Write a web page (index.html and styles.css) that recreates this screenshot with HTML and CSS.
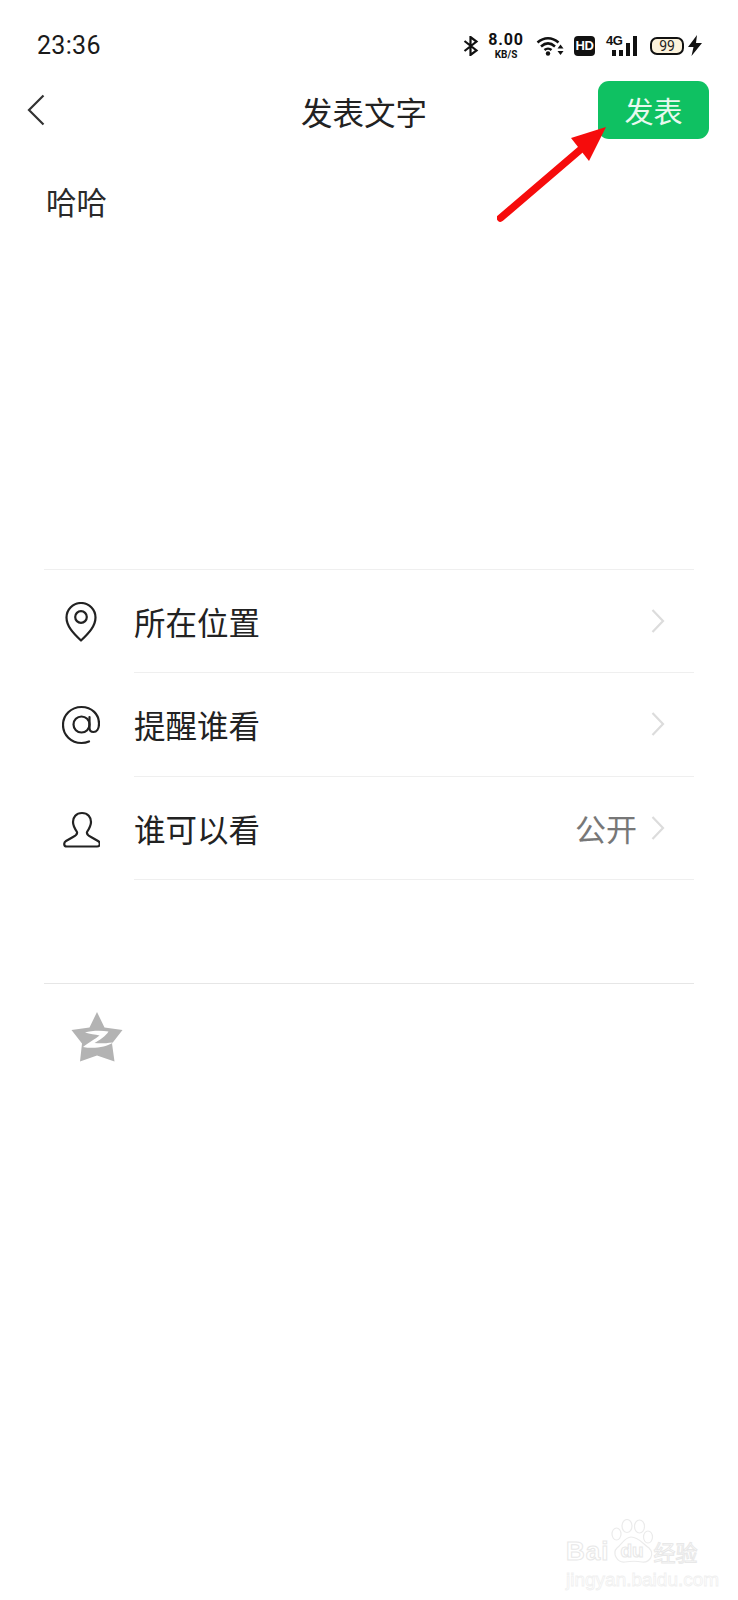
FILE: index.html
```html
<!DOCTYPE html>
<html lang="zh">
<head>
  <meta charset="utf-8">
  <meta name="viewport" content="width=device-width, initial-scale=1">
  <title>发表文字</title>
  <link rel="stylesheet" href="styles.css">
</head>
<body>
<div class="page">

  <!-- status bar -->
  <div class="status">
    <span class="time">23:36</span>
    <div class="status-icons">
      <svg class="ic-bt" width="16" height="20" viewBox="0 0 16 20"><path d="M1.500 5 13.500 14.500 7.500 19V1L13.500 5.500 1.500 15" fill="none" stroke="#111" stroke-width="2.200"/></svg>
      <div class="speed"><b>8.00</b><span>KB/S</span></div>
      <svg class="ic-wifi" width="28" height="20" viewBox="0 0 28 20">
        <path d="M1.500 6.500C8 .8 16 .8 22.500 6.500M5 10.500C9.500 6.500 14.500 6.500 19 10.500M8.500 14C10.500 12.300 13.500 12.300 15.500 14" fill="none" stroke="#111" stroke-width="2.500"/>
        <circle cx="12" cy="17.500" r="2.200" fill="#111"/>
        <path d="M24.500 8.500 27.500 12.500H21.500ZM24.500 19 27.500 15H21.500Z" fill="#111"/>
      </svg>
      <div class="hd">HD</div>
      <div class="signal">
        <span class="four-g">4G</span>
        <i class="b1"></i><i class="b2"></i><i class="b3"></i><i class="b4"></i>
      </div>
      <div class="battery"><span>99</span></div>
      <svg class="ic-bolt" width="14" height="21" viewBox="0 0 14 21"><path d="M9 0 0 12H5.500L3.500 21 14 8H8Z" fill="#111"/></svg>
    </div>
  </div>

  <!-- title bar -->
  <div class="nav">
    <svg class="back" width="20" height="32" viewBox="0 0 20 32"><path d="M17.500 1.500 3 16 17.500 30.500" fill="none" stroke="#333" stroke-width="2.200"/></svg>
    <div class="nav-title">发表文字</div>
    <div class="send">发表</div>
  </div>

  <div class="compose">哈哈</div>

  <!-- options -->
  <div class="options">
    <div class="row">
      <svg class="row-icon" width="38" height="40" viewBox="0 0 38 40">
        <path d="M19 38.500C11 31 4.500 24 4.500 15.500A14.500 14.500 0 0 1 33.500 15.500C33.500 24 27 31 19 38.500Z" fill="none" stroke="#222" stroke-width="2.200" stroke-linejoin="round"/>
        <circle cx="19" cy="15" r="5.800" fill="none" stroke="#222" stroke-width="2.200"/>
      </svg>
      <div class="row-body">
        <span class="row-label">所在位置</span>
        <svg class="chev" width="14" height="24" viewBox="0 0 14 24"><path d="M1.500 1 12 12 1.500 23" fill="none" stroke="#dcdcdc" stroke-width="2.200"/></svg>
      </div>
    </div>
    <div class="row">
      <svg class="row-icon" width="38" height="40" viewBox="0 0 38 40">
        <path d="M27 36.500C24.500 37.600 22 38 19.500 38 9 38 1 30 1 20S9 2 19.500 2 37 9.500 37 18.500C37 24 34.500 27 31.500 27 29 27 27.500 25.500 27.500 23V12" fill="none" stroke="#222" stroke-width="2.200" stroke-linecap="round"/>
        <circle cx="19.500" cy="19.500" r="8" fill="none" stroke="#222" stroke-width="2.200"/>
      </svg>
      <div class="row-body">
        <span class="row-label">提醒谁看</span>
        <svg class="chev" width="14" height="24" viewBox="0 0 14 24"><path d="M1.500 1 12 12 1.500 23" fill="none" stroke="#dcdcdc" stroke-width="2.200"/></svg>
      </div>
    </div>
    <div class="row">
      <svg class="row-icon" width="38" height="40" viewBox="0 0 38 40">
        <path d="M20 5C14 5 11 9.500 11 14 11 18 13 21 15 24 15.500 26 14 27.500 11 29L4 33C1.500 34.500 1.500 38.500 5 38.500H35C38.500 38.500 38.500 34.500 36 33L29 29C26 27.500 24.500 26 25 24 27 21 29 18 29 14 29 9.500 26 5 20 5Z" fill="none" stroke="#222" stroke-width="2.200" stroke-linejoin="round"/>
      </svg>
      <div class="row-body">
        <span class="row-label">谁可以看</span>
        <span class="row-value">公开</span>
        <svg class="chev" width="14" height="24" viewBox="0 0 14 24"><path d="M1.500 1 12 12 1.500 23" fill="none" stroke="#dcdcdc" stroke-width="2.200"/></svg>
      </div>
    </div>
  </div>

  <div class="share">
    <svg class="qzone" width="52" height="50" viewBox="0 0 52 50">
      <path d="M26 0 33.500 15.500 51.500 18 41 31.500 43.500 49.500 26 43.500 9 49.500 11 31.500.5 18 18.500 15.500Z" fill="#b3b3b3"/>
      <path d="M14 20.500C20 18.500 30 18 37.500 19.500 35 24 28 28.500 23.500 31 28.500 31.500 33 31.500 42 30.500 35 35.500 22 37 12 35 17 31 24.500 27 28.500 23.500 24 22.500 19 22 14 20.500Z" fill="#fff"/>
    </svg>
  </div>

  <!-- arrow drawn over the screenshot -->
  <svg class="arrow" width="120" height="100" viewBox="0 0 120 100">
    <path d="M3.500 95 83 27" fill="none" stroke="#f60c0c" stroke-width="7.500" stroke-linecap="round"/>
    <path d="M109 4 74 15 92 38Z" fill="#f60c0c"/>
  </svg>

  <!-- baidu jingyan watermark -->
  <div class="watermark">
    <div class="wm-top">
      <span class="wm-bai">Bai</span>
      <div class="wm-paw">
        <svg width="44" height="46" viewBox="0 0 44 46">
          <g fill="#fff" stroke="#ebebeb" stroke-width="1.200">
            <ellipse cx="5.500" cy="15" rx="4.500" ry="6"/>
            <ellipse cx="16" cy="7" rx="5" ry="6.500"/>
            <ellipse cx="28.500" cy="7.500" rx="5" ry="6.500"/>
            <ellipse cx="37" cy="18" rx="4.500" ry="6"/>
            <path d="M20 18C14 18 11 25 6 29 1 34 6 44 14 43 20 42 26 42 31 43 39 44 44 35 38 29 32 25 28 18 20 18Z"/>
          </g>
        </svg>
        <span class="wm-du">du</span>
      </div>
      <span class="wm-jy">经验</span>
    </div>
    <div class="wm-url">jingyan.baidu.com</div>
  </div>

</div>
</body>
</html>
```

FILE: styles.css
```css
html, body { margin: 0; padding: 0; background: #fff; }
body { font-family: "Noto Sans CJK SC", "Noto Sans", sans-serif; color: #222; }

.page { position: relative; width: 738px; height: 1600px; overflow: hidden; background: #fff; }

/* status bar */
.status { display: flex; align-items: center; justify-content: space-between; height: 81px; padding: 10px 36px 0 37px; box-sizing: border-box; }
.time { font-family: Roboto, sans-serif; font-size: 25px; letter-spacing: .3px; color: #1a1a1a; }
.status-icons { display: flex; align-items: center; }
.ic-bt { margin-right: 10px; }
.speed { display: flex; flex-direction: column; align-items: center; width: 34px; margin-right: 13px; font-family: Roboto, sans-serif; color: #111; }
.speed b { font-size: 16px; letter-spacing: .8px; line-height: 17px; }
.speed span { font-size: 10px; font-weight: 700; line-height: 13px; }
.ic-wifi { margin-right: 10px; }
.hd { width: 21px; height: 20px; margin-right: 12px; background: #111; border-radius: 4px; color: #fff; font-family: "Liberation Sans", sans-serif; font-size: 13px; font-weight: 700; line-height: 20px; text-align: center; letter-spacing: -.5px; }
.signal { position: relative; display: flex; align-items: flex-end; gap: 3px; width: 31px; height: 20px; margin-right: 12px; padding-left: 5px; box-sizing: border-box; }
.four-g { position: absolute; left: -1px; top: -3px; font-family: "Liberation Sans", sans-serif; font-size: 13px; font-weight: 700; color: #111; letter-spacing: -.6px; }
.signal i { display: block; width: 4px; background: #111; }
.signal .b1, .signal .b2 { height: 6px; }
.signal .b3 { height: 13px; }
.signal .b4 { height: 20px; }
.battery { width: 34px; height: 18px; margin-right: 4px; box-sizing: border-box; border: 2px solid #111; border-radius: 7px; background: #fdf3dc; text-align: center; font-family: Roboto, sans-serif; font-size: 14px; line-height: 14px; color: #222; }

/* title bar */
.nav { position: relative; display: flex; align-items: center; justify-content: space-between; height: 58px; padding: 0 29px 0 26px; }
.back { display: block; }
.nav-title { position: absolute; left: 0; right: 10px; top: 1px; text-align: center; font-size: 31.500px; line-height: 58px; color: #222; }
.send { width: 111px; height: 58px; background: #0fc162; border-radius: 11px; color: #e8f9ef; font-size: 29px; line-height: 58px; text-align: center; }

/* text area */
.compose { height: 430px; padding: 42px 0 0 46px; box-sizing: border-box; font-size: 30.500px; line-height: 40px; color: #2a2a2a; }

/* list */
.options { margin: 0 44px; border-top: 1px solid #efefef; }
.row { display: flex; align-items: center; height: 103.300px; }
.row-icon { flex: none; width: 38px; margin: 0 34px 0 18px; }
.row-body { flex: 1; display: flex; align-items: center; height: 100%; box-sizing: border-box; border-bottom: 1px solid #efefef; padding-right: 29px; }
.row-label { flex: 1; font-size: 31.500px; color: #222; }
.row-value { margin-right: 14px; font-size: 31px; color: #777; }
.chev { flex: none; }

/* share */
.share { margin: 103px 44px 0; border-top: 1px solid #e6e6e6; padding: 28px 0 0 27px; }
.qzone { display: block; }

/* overlays */
.arrow { position: absolute; left: 497px; top: 123px; }
.watermark { position: absolute; left: 566px; top: 1521px; width: 140px; color: #fff; }
.wm-top { display: flex; align-items: flex-end; height: 44px; }
.wm-bai { font-family: "Liberation Sans", sans-serif; font-size: 26px; font-weight: 700; line-height: 28px; letter-spacing: 1px; -webkit-text-stroke: 1px #e8e8e8; }
.wm-paw { position: relative; flex: none; width: 44px; height: 46px; margin-left: 2px; margin-right: -2px; }
.wm-du { position: absolute; left: 9px; top: 21px; font-family: "Liberation Sans", sans-serif; font-size: 19px; font-weight: 700; line-height: 22px; -webkit-text-stroke: 1px #e8e8e8; }
.wm-jy { font-size: 22px; line-height: 28px; -webkit-text-stroke: 1px #e8e8e8; }
.wm-url { margin-top: 5px; font-family: "Liberation Sans", sans-serif; font-size: 19px; line-height: 20px; white-space: nowrap; -webkit-text-stroke: .8px #f0f0f0; }
```
